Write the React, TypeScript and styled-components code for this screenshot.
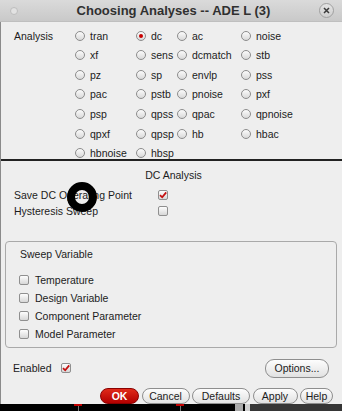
import React from 'react';
import styled, { createGlobalStyle } from 'styled-components';

const GlobalStyle = createGlobalStyle`
  html, body {
    margin: 0;
    padding: 0;
    background: #000;
  }
  body {
    font-family: "Liberation Sans", Arial, sans-serif;
    font-size: 10.5px;
    color: #1c1c1c;
  }
`;

const Window = styled.div`
  position: relative;
  width: 342px;
  height: 411px;
  display: flex;
  flex-direction: column;
  overflow: hidden;
`;

const TitleBar = styled.div`
  height: 22px;
  flex: none;
  display: flex;
  align-items: center;
  justify-content: space-between;
  padding: 0 8px 0 10px;
  background: linear-gradient(#dadada, #c9c9c9);
  border-bottom: 1px solid #bfbfbf;
  box-sizing: border-box;
`;

const TitleDot = styled.span`
  width: 6px;
  height: 6px;
  border-radius: 50%;
  background: #e2e2e2;
  border: 1px solid #bdbdbd;
`;

const Title = styled.div`
  font-weight: bold;
  font-size: 13px;
  color: #303030;
  margin-left: 10px;
`;

const CloseButton = styled.span`
  width: 13px;
  height: 13px;
  border-radius: 50%;
  border: 1px solid #a0a0a0;
  background: linear-gradient(#e4e4e4, #cfcfcf);
  display: flex;
  align-items: center;
  justify-content: center;
`;

const Body = styled.div`
  flex: 1;
  display: flex;
  flex-direction: column;
  background: #eeeeee;
  border-left: 1px solid #8a8a8a;
`;

const AnalysisGrid = styled.div`
  display: grid;
  grid-template-columns: 61px 61px 41px 64px 1fr;
  grid-auto-rows: 12px;
  row-gap: 7.67px;
  padding: 7.5px 0 0 13px;
`;

const SectionLabel = styled.div`
  grid-column: 1;
  grid-row: 1;
  line-height: 12px;
`;

const RadioItem = styled.label`
  display: flex;
  align-items: center;
  gap: 5px;
  line-height: 12px;
  white-space: nowrap;
`;

const RadioCircle = styled.span<{ $on?: boolean }>`
  width: 10px;
  height: 10px;
  box-sizing: border-box;
  border-radius: 50%;
  border: 1px solid #8c8c8c;
  background: linear-gradient(#fbfbfb, #d9d9d9);
  display: flex;
  align-items: center;
  justify-content: center;
  flex: none;
  &::after {
    content: '';
    display: ${p => (p.$on ? 'block' : 'none')};
    width: 4px;
    height: 4px;
    border-radius: 50%;
    background: #c80000;
  }
`;

const Divider = styled.div`
  height: 2px;
  background: #222;
  flex: none;
`;

const DcTitle = styled.div`
  margin-top: 6.5px;
  line-height: 14px;
  text-align: center;
  padding-left: 4px;
`;

const OptionList = styled.div`
  margin-top: 5px;
  display: flex;
  flex-direction: column;
`;

const OptionRow = styled.div`
  display: grid;
  grid-template-columns: 144px 10px;
  align-items: center;
  height: 16px;
  padding-left: 13px;
`;

const Box = styled.span`
  width: 10px;
  height: 10px;
  box-sizing: border-box;
  border-radius: 2px;
  border: 1px solid #8f8f8f;
  background: linear-gradient(#fdfdfd, #d7d7d7);
  display: flex;
  align-items: center;
  justify-content: center;
  flex: none;
`;

const GroupBox = styled.div`
  margin: 22px 5px 0 4px;
  height: 107px;
  box-sizing: border-box;
  border: 1px solid #a9a9a9;
  border-radius: 4px;
  padding: 5px 0 0 14px;
`;

const GroupTitle = styled.div`
  line-height: 14px;
`;

const CheckList = styled.div`
  margin-top: 10px;
  margin-left: -1px;
  display: flex;
  flex-direction: column;
`;

const CheckRow = styled.label`
  display: flex;
  align-items: center;
  gap: 6px;
  height: 18px;
`;

const Footer = styled.div`
  margin: 11px 13px 0 12px;
  height: 19px;
  display: flex;
  align-items: center;
  justify-content: space-between;
`;

const EnabledGroup = styled.div`
  display: flex;
  align-items: center;
  gap: 9px;
`;

const PillButton = styled.button<{ $width: number; $primary?: boolean }>`
  width: ${p => p.$width}px;
  height: 100%;
  padding: 0;
  border-radius: 9px;
  font-family: inherit;
  font-size: 10.5px;
  border: 1px solid ${p => (p.$primary ? '#8a0000' : '#8e8e8e')};
  background: ${p =>
    p.$primary
      ? 'linear-gradient(#e02a1a, #b30000)'
      : 'linear-gradient(#fdfdfd, #e1e1e1)'};
  color: ${p => (p.$primary ? '#fff' : '#1c1c1c')};
  font-weight: ${p => (p.$primary ? 'bold' : 'normal')};
  box-sizing: border-box;
`;

const OptionsButton = styled(PillButton)`
  height: 19px;
`;

const ButtonRow = styled.div`
  margin-top: 10px;
  height: 16px;
  display: flex;
  justify-content: flex-end;
  gap: 2.5px;
  padding-right: 9px;
`;

const Desktop = styled.div`
  position: relative;
  height: 7px;
  flex: none;
  background: linear-gradient(90deg, #000 0 250px, #363636 250px);
`;

const DeskMark = styled.span<{ $x: number; $w: number; $color: string }>`
  position: absolute;
  top: 0;
  left: ${p => p.$x}px;
  width: ${p => p.$w}px;
  height: 2px;
  background: ${p => p.$color};
  &::after {
    content: '';
    position: absolute;
    left: 50%;
    top: 2px;
    width: 1px;
    height: 5px;
    background: #777;
  }
`;

const DeskBlock = styled.span<{ $x: number; $w: number; $color: string }>`
  position: absolute;
  top: 0;
  left: ${p => p.$x}px;
  width: ${p => p.$w}px;
  height: 7px;
  background: ${p => p.$color};
`;

const CursorRing = styled.svg`
  position: absolute;
  left: 66px;
  top: 181px;
  pointer-events: none;
`;

const Check = () => (
  <svg width="8" height="8" viewBox="0 0 8 8">
    <path d="M1 4.2 L3.2 6.3 L7.2 1.4" fill="none" stroke="#c41010" strokeWidth="1.8" />
  </svg>
);

const columns: string[][] = [
  ['tran', 'xf', 'pz', 'pac', 'psp', 'qpxf', 'hbnoise'],
  ['dc', 'sens', 'sp', 'pstb', 'qpss', 'qpsp', 'hbsp'],
  ['ac', 'dcmatch', 'envlp', 'pnoise', 'qpac', 'hb'],
  ['noise', 'stb', 'pss', 'pxf', 'qpnoise', 'hbac'],
];

const sweepOptions = ['Temperature', 'Design Variable', 'Component Parameter', 'Model Parameter'];

const buttons = [
  { label: 'OK', width: 39, primary: true },
  { label: 'Cancel', width: 48 },
  { label: 'Defaults', width: 58 },
  { label: 'Apply', width: 45 },
  { label: 'Help', width: 33 },
];

export default function App() {
  return (
    <Window>
      <GlobalStyle />
      <TitleBar>
        <TitleDot />
        <Title>Choosing Analyses -- ADE L (3)</Title>
        <CloseButton>
          <svg width="7" height="7" viewBox="0 0 7 7">
            <path d="M1 1 L6 6 M6 1 L1 6" stroke="#3a3a3a" strokeWidth="1.5" />
          </svg>
        </CloseButton>
      </TitleBar>
      <Body>
        <AnalysisGrid>
          <SectionLabel>Analysis</SectionLabel>
          {columns.map((col, c) =>
            col.map((name, r) => (
              <RadioItem key={name} style={{ gridColumn: c + 2, gridRow: r + 1 }}>
                <RadioCircle $on={name === 'dc'} />
                {name}
              </RadioItem>
            ))
          )}
        </AnalysisGrid>
        <Divider />
        <DcTitle>DC Analysis</DcTitle>
        <OptionList>
          <OptionRow>
            <span>Save DC Operating Point</span>
            <Box><Check /></Box>
          </OptionRow>
          <OptionRow>
            <span>Hysteresis Sweep</span>
            <Box />
          </OptionRow>
        </OptionList>
        <GroupBox>
          <GroupTitle>Sweep Variable</GroupTitle>
          <CheckList>
            {sweepOptions.map(o => (
              <CheckRow key={o}>
                <Box />
                {o}
              </CheckRow>
            ))}
          </CheckList>
        </GroupBox>
        <Footer>
          <EnabledGroup>
            Enabled
            <Box><Check /></Box>
          </EnabledGroup>
          <OptionsButton $width={64}>Options...</OptionsButton>
        </Footer>
        <ButtonRow>
          {buttons.map(b => (
            <PillButton key={b.label} $width={b.width} $primary={b.primary}>
              {b.label}
            </PillButton>
          ))}
        </ButtonRow>
      </Body>
      <Desktop>
        <DeskMark $x={74} $w={8} $color="#c00000" />
        <DeskMark $x={176} $w={8} $color="#c00000" />
        <DeskBlock $x={235} $w={8} $color="#a9a9a9" />
        <DeskBlock $x={245} $w={5} $color="#d0d0d0" />
      </Desktop>
      <CursorRing width="32" height="32" viewBox="0 0 32 32">
        <circle cx="16" cy="16" r="11" fill="none" stroke="#000" strokeWidth="8" />
      </CursorRing>
    </Window>
  );
}
